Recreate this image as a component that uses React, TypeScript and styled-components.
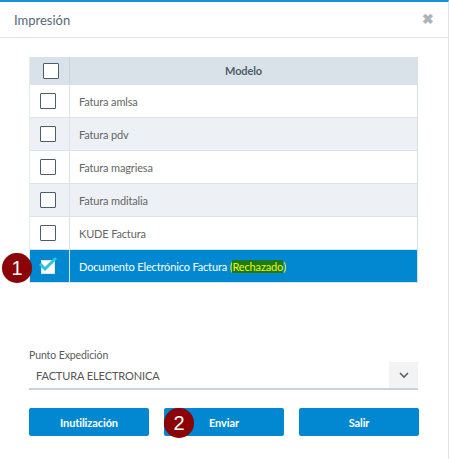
import React from "react";
import styled, { createGlobalStyle } from "styled-components";

const Global = createGlobalStyle`
  html, body { margin: 0; padding: 0; background: #fff; }
  body { font-family: Lato, "Open Sans", sans-serif; }
  * { box-sizing: border-box; }
`;

const Modal = styled.div`
  width: 449px;
  height: 459px;
  border-top: 2px solid #1590da;
  border-right: 1px solid #dfe4e8;
  background: #fff;
  position: relative;
`;

const Header = styled.div`
  height: 36px;
  display: flex;
  align-items: center;
  justify-content: space-between;
  padding: 0 14px 0 14px;
  border-bottom: 1px solid #e3e3e3;
`;

const Title = styled.div`
  font-size: 13px;
  color: #56687a;
`;

const Close = styled.div`
  color: #a9b4bb;
  font-size: 14px;
  font-weight: 700;
  line-height: 1;
  margin-top: -2px;
`;

const Body = styled.div`
  padding: 19px 30px 0 29px;
`;

const Table = styled.div`
  width: 389px;
  border-right: 1px solid #d7e0e6;
  border-left: 1px solid #e6ebee;
`;

const Row = styled.div<{ $bg: string; $h: number }>`
  display: grid;
  grid-template-columns: 40px 1fr;
  height: ${(p) => p.$h}px;
  background: ${(p) => p.$bg};
  border-bottom: 1px solid #dde4e9;
`;

const CheckCell = styled.div<{ $line: string; $pad: number }>`
  display: flex;
  align-items: center;
  justify-content: flex-start;
  padding-left: ${(p) => p.$pad}px;
  border-right: 1px solid ${(p) => p.$line};
  position: relative;
`;

const TextCell = styled.div<{ $center?: boolean; $color: string; $weight: number }>`
  display: flex;
  align-items: center;
  justify-content: ${(p) => (p.$center ? "center" : "flex-start")};
  padding-left: ${(p) => (p.$center ? 0 : 9)}px;
  font-size: 11px;
  color: ${(p) => p.$color};
  font-weight: ${(p) => p.$weight};
  letter-spacing: -0.15px;
`;

const Box = styled.div`
  width: 16px;
  height: 16px;
  border: 1.5px solid #4b5e6c;
  background: #fff;
  border-radius: 1px;
`;

const CheckedWrap = styled.div`
  position: relative;
  width: 16px;
  height: 16px;
`;

const CheckedBox = styled.div`
  width: 14px;
  height: 14px;
  background: #fff;
  border: 1px solid #dfe7ee;
  position: absolute;
  left: 1px;
  top: 2px;
`;

const CheckSvg = styled.svg`
  position: absolute;
  left: -3px;
  top: -3px;
`;

const Badge = styled.div<{ $x: number; $y: number }>`
  position: absolute;
  left: ${(p) => p.$x}px;
  top: ${(p) => p.$y}px;
  width: 30px;
  height: 30px;
  border-radius: 50%;
  background: #8b0306;
  color: #fff;
  font-family: "Liberation Sans", Arial, sans-serif;
  font-size: 20px;
  display: flex;
  align-items: center;
  justify-content: center;
  box-shadow: 0 0 1px rgba(0,0,0,0.3);
  z-index: 2;
`;

const Paren = styled.span`
  color: #f4f400;
`;

const Hi = styled.span`
  color: #f4f400;
  background: #1b7a1b;
`;

const Field = styled.div`
  margin-top: 66px;
  width: 389px;
`;

const Label = styled.div`
  font-size: 10.5px;
  color: #5a5a5a;
  margin-bottom: 1px;
  letter-spacing: -0.1px;
`;

const Select = styled.div`
  display: flex;
  align-items: stretch;
  height: 28px;
  border-bottom: 2px solid #c5d3dc;
`;

const SelectValue = styled.div`
  flex: 1;
  display: flex;
  align-items: center;
  padding-left: 7px;
  font-size: 11px;
  color: #555;
  letter-spacing: -0.1px;
`;

const SelectBtn = styled.div`
  width: 29px;
  background: #f3f3f3;
  display: flex;
  align-items: center;
  justify-content: center;
`;

const Buttons = styled.div`
  margin-top: 18px;
  display: grid;
  grid-template-columns: repeat(3, 120px);
  column-gap: 15px;
  width: 390px;
`;

const Btn = styled.div`
  height: 28px;
  background: #0288d1;
  color: #fff;
  font-size: 11px;
  font-weight: 700;
  display: flex;
  align-items: center;
  justify-content: center;
  border-radius: 2px;
  letter-spacing: -0.1px;
`;

const rows = ["Fatura amlsa", "Fatura pdv", "Fatura magriesa", "Fatura mditalia", "KUDE Factura"];

export default function App() {
  return (
    <>
      <Global />
      <Modal>
        <Header>
          <Title>Impresión</Title>
          <Close>✖</Close>
        </Header>
        <Body>
          <Table>
            <Row $bg="#d9e2e8" $h={28}>
              <CheckCell $line="#c9d3da" $pad={13}>
                <Box />
              </CheckCell>
              <TextCell $center $color="#4f5f6c" $weight={700}>Modelo</TextCell>
            </Row>
            {rows.map((r, i) => (
              <Row key={r} $bg={i % 2 === 0 ? "#ffffff" : "#edf1f5"} $h={33}>
                <CheckCell $line="#dde4e9" $pad={10}>
                  <Box />
                </CheckCell>
                <TextCell $color="#666" $weight={400}>{r}</TextCell>
              </Row>
            ))}
            <Row $bg="#0288d1" $h={33}>
              <CheckCell $line="#d0e6f3" $pad={10}>
                <CheckedWrap>
                  <CheckedBox />
                  <CheckSvg width="22" height="18" viewBox="0 0 22 18">
                    <path d="M3 9 L8 14 L19 3" fill="none" stroke="#2ec3e0" strokeWidth="3" strokeLinecap="butt" />
                  </CheckSvg>
                </CheckedWrap>
              </CheckCell>
              <TextCell $color="#fff" $weight={400}>
                Documento Electrónico Factura&nbsp;<Paren>(</Paren><Hi>Rechazado</Hi><Paren>)</Paren>
              </TextCell>
            </Row>
          </Table>
          <Field>
            <Label>Punto Expedición</Label>
            <Select>
              <SelectValue>FACTURA ELECTRONICA</SelectValue>
              <SelectBtn>
                <svg width="12" height="8" viewBox="0 0 12 8">
                  <path d="M2 2 L6 6 L10 2" fill="none" stroke="#55636e" strokeWidth="1.6" />
                </svg>
              </SelectBtn>
            </Select>
          </Field>
          <Buttons>
            <Btn>Inutilización</Btn>
            <Btn>Enviar</Btn>
            <Btn>Salir</Btn>
          </Buttons>
        </Body>
        <Badge $x={2} $y={251}>1</Badge>
        <Badge $x={164} $y={406}>2</Badge>
      </Modal>
    </>
  );
}
